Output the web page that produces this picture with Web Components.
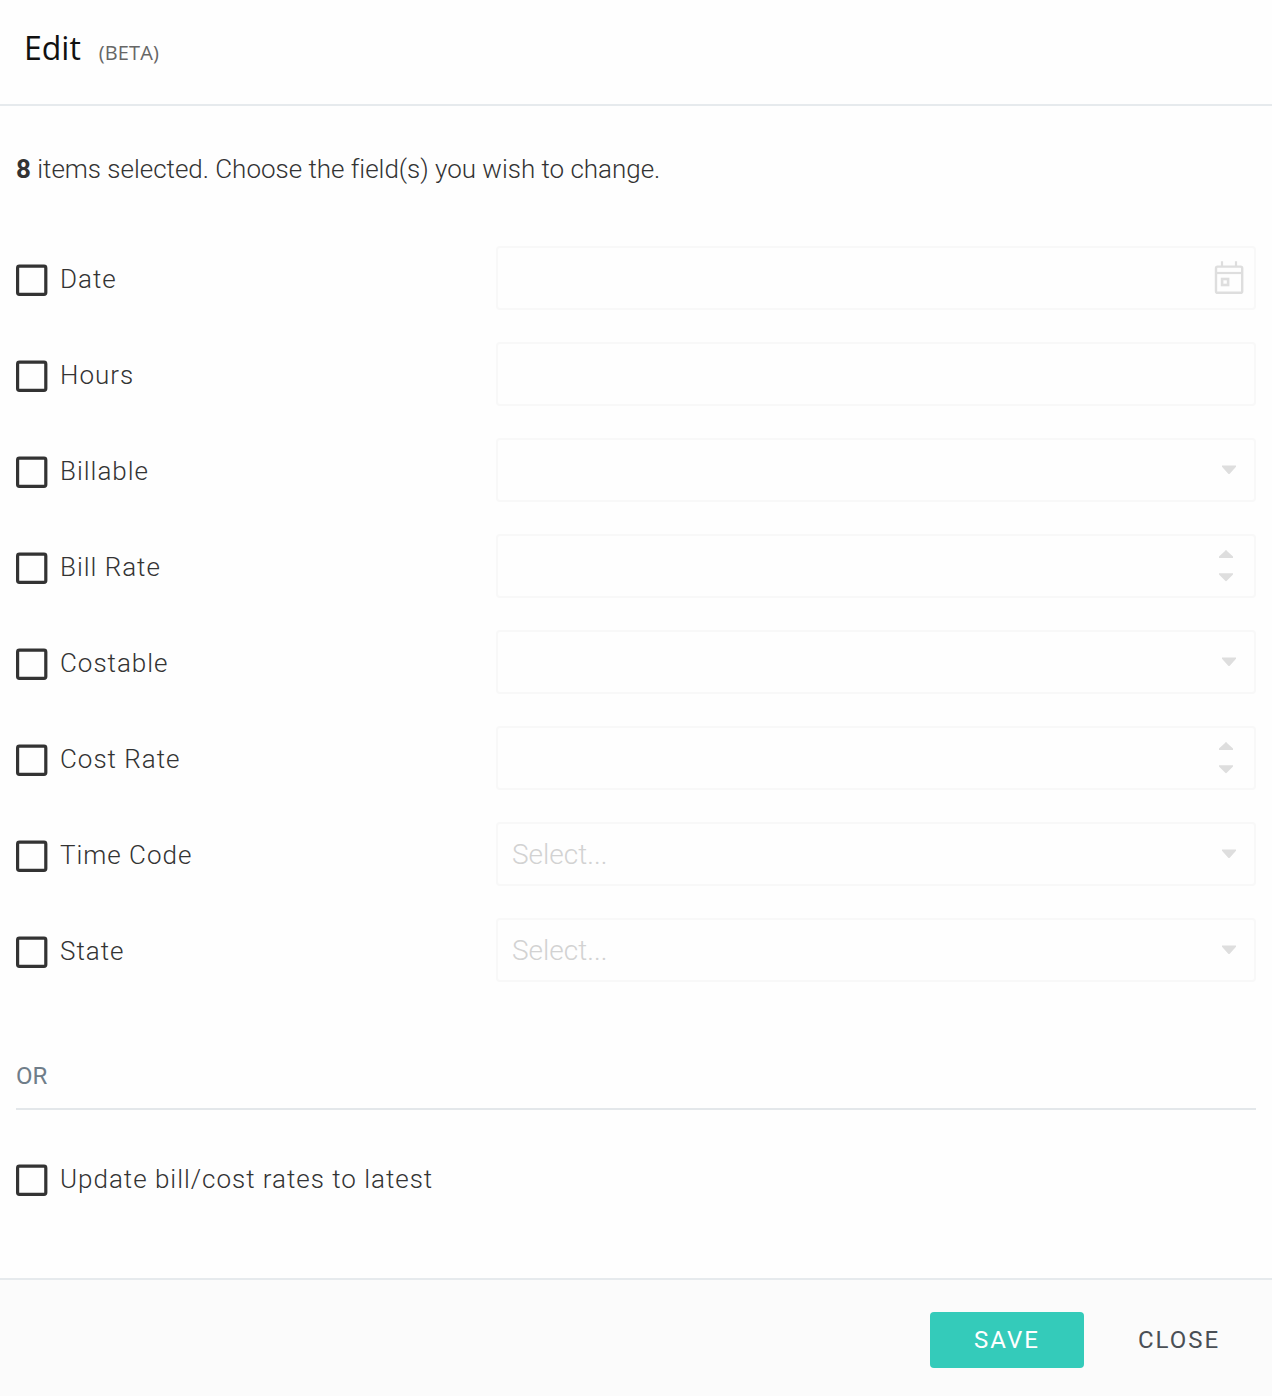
<!DOCTYPE html>
<html lang="en">
<head>
<meta charset="utf-8">
<title>Edit</title>
<style>
body {
  margin: 0;
  background: #fefefe;
  color: #333;
  font-family: Roboto, "Liberation Sans", sans-serif;
}
</style>
</head>
<body>
<edit-dialog>
  <span slot="title">Edit</span>
  <span slot="tag">(BETA)</span>
  <selection-summary count="8">items selected. Choose the field(s) you wish to change.</selection-summary>
  <field-list>
    <field-row label="Date" type="date"></field-row>
    <field-row label="Hours" type="text"></field-row>
    <field-row label="Billable" type="select"></field-row>
    <field-row label="Bill Rate" type="number"></field-row>
    <field-row label="Costable" type="select"></field-row>
    <field-row label="Cost Rate" type="number"></field-row>
    <field-row label="Time Code" type="select" placeholder="Select..."></field-row>
    <field-row label="State" type="select" placeholder="Select..."></field-row>
  </field-list>
  <section-divider>OR</section-divider>
  <check-box>Update bill/cost rates to latest</check-box>
  <dialog-button slot="actions" kind="primary">SAVE</dialog-button>
  <dialog-button slot="actions">CLOSE</dialog-button>
</edit-dialog>

<script>
function makeTemplate(content) {
  let template = document.createElement("template");
  template.innerHTML = content;
  return template;
}

class BaseElement extends HTMLElement {
  constructor() {
    super();
    this.attachShadow({ mode: "open" });
    this.shadowRoot.appendChild(this.constructor.template.content.cloneNode(true));
  }
}

class EditDialog extends BaseElement {
  static template = makeTemplate(`
<style>
:host {
  display: flex;
  flex-direction: column;
  height: 1396px;
}
header {
  display: flex;
  align-items: baseline;
  box-sizing: border-box;
  height: 106px;
  padding: 26px 24px 0;
  gap: 18px;
  border-bottom: 2px solid #e6eaed;
  font-family: "Open Sans", "Noto Sans", sans-serif;
}
h1 {
  margin: 0;
  font-size: 32px;
  line-height: 44px;
  font-weight: 400;
  color: #111;
}
.tag {
  font-size: 20px;
  letter-spacing: 0.1px;
  color: #666;
}
main {
  flex: 1;
  padding: 46px 16px 0;
}
footer {
  display: flex;
  justify-content: flex-end;
  box-sizing: border-box;
  height: 118px;
  padding: 32px 15px 0;
  gap: 17px;
  border-top: 2px solid #e6eaed;
  background: #fbfbfb;
}
</style>
<header>
  <h1><slot name="title"></slot></h1>
  <div class="tag"><slot name="tag"></slot></div>
</header>
<main><slot></slot></main>
<footer><slot name="actions"></slot></footer>`);
}
customElements.define("edit-dialog", EditDialog);

class SelectionSummary extends BaseElement {
  static template = makeTemplate(`
<style>
:host {
  display: block;
  font-size: 26px;
  line-height: 34px;
  font-weight: 300;
  letter-spacing: -0.02px;
}
b {
  font-weight: 700;
}
</style>
<b></b> <slot></slot>`);

  connectedCallback() {
    this.shadowRoot.querySelector("b").textContent = this.getAttribute("count");
  }
}
customElements.define("selection-summary", SelectionSummary);

class FieldList extends BaseElement {
  static template = makeTemplate(`
<style>
:host {
  display: grid;
  gap: 32px;
  margin-top: 60px;
}
</style>
<slot></slot>`);
}
customElements.define("field-list", FieldList);

class CheckBox extends BaseElement {
  static template = makeTemplate(`
<style>
:host {
  display: flex;
  gap: 12px;
  font-size: 26px;
  line-height: 34px;
  font-weight: 300;
  letter-spacing: 0.98px;
}
svg {
  flex: none;
  margin-top: 2px;
}
</style>
<svg width="32" height="32" viewBox="0 0 32 32">
  <rect x="1.6" y="2.1" width="28.2" height="28.2" rx="1.8" fill="none" stroke="#333" stroke-width="3.2"/>
</svg>
<span><slot></slot></span>`);
}
customElements.define("check-box", CheckBox);

const ICONS = {
  text: "",
  date: `
<svg class="date" width="32" height="34" viewBox="0 0 32 34" fill="none" stroke="#dedede">
  <rect x="3" y="5.6" width="26.2" height="26.2" rx="1.6" stroke-width="2.4"/>
  <path d="M9 .2v5M23 .2v5" stroke-width="2.2"/>
  <path d="M3 12h26" stroke-width="2.2"/>
  <rect x="9.1" y="18" width="6" height="6" stroke-width="2.6"/>
</svg>`,
  select: `
<svg class="select" width="16" height="10" viewBox="0 0 16 10" fill="#dedede">
  <path d="M1 .4h14v1.4L9 8.4Q8 9.6 7 8.4L1 1.8z"/>
</svg>`,
  number: `
<svg class="number" width="16" height="34" viewBox="0 0 16 34" fill="#dedede">
  <path d="M1 9h14V7.6L9 2Q8 .2 7 2L1 7.6z"/>
  <path d="M1 24.2h14v1.4L9 31.6Q8 33 7 31.6L1 25.6z"/>
</svg>`
};

class FieldRow extends BaseElement {
  static template = makeTemplate(`
<style>
:host {
  display: grid;
  grid-template-columns: 480px 1fr;
  align-items: center;
}
check-box {
  padding-top: 2px;
}
.control {
  display: flex;
  align-items: center;
  justify-content: space-between;
  box-sizing: border-box;
  height: 64px;
  padding-left: 14px;
  border: 2px solid #f8f8f8;
  border-radius: 4px;
}
.placeholder {
  padding-top: 2px;
  font-size: 28px;
  line-height: 34px;
  font-weight: 300;
  color: #d2d2d2;
}
.date {
  margin-right: 9px;
}
.select {
  margin-right: 17px;
}
.number {
  margin-right: 20px;
}
</style>
<check-box></check-box>
<div class="control"><span class="placeholder"></span></div>`);

  connectedCallback() {
    let $control = this.shadowRoot.querySelector(".control");
    this.shadowRoot.querySelector("check-box").textContent = this.getAttribute("label");
    this.shadowRoot.querySelector(".placeholder").textContent = this.getAttribute("placeholder") || "";
    $control.insertAdjacentHTML("beforeend", ICONS[this.getAttribute("type")]);
  }
}
customElements.define("field-row", FieldRow);

class SectionDivider extends BaseElement {
  static template = makeTemplate(`
<style>
:host {
  display: block;
  margin: 78px 0 52px;
  padding-bottom: 16px;
  border-bottom: 2px solid #e3e7ea;
  font-size: 24px;
  line-height: 32px;
  color: #6f7d89;
}
</style>
<slot></slot>`);
}
customElements.define("section-divider", SectionDivider);

class DialogButton extends BaseElement {
  static template = makeTemplate(`
<style>
:host {
  display: block;
}
button {
  display: block;
  height: 56px;
  width: 156px;
  padding: 0;
  border: none;
  border-radius: 4px;
  background: none;
  color: #4a4f55;
  font: 400 24px/56px Roboto, sans-serif;
  letter-spacing: 2px;
  cursor: pointer;
}
:host([kind="primary"]) button {
  width: 154px;
  background: #34cbba;
  color: #fff;
}
</style>
<button><slot></slot></button>`);
}
customElements.define("dialog-button", DialogButton);
</script>
</body>
</html>
